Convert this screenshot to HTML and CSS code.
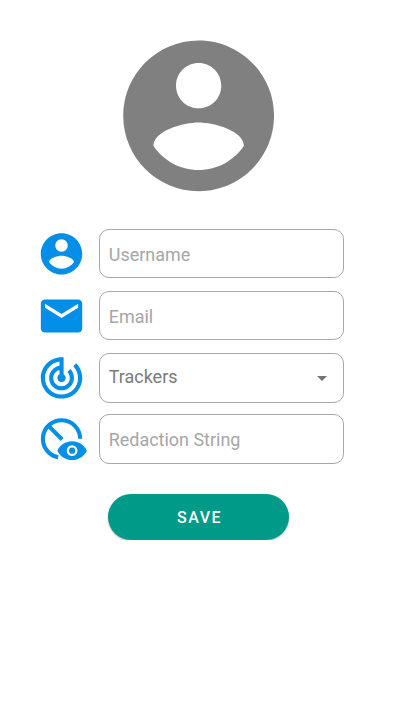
FILE: index.html
```html
<!DOCTYPE html>
<html lang="en">
<head>
<meta charset="utf-8">
<title>Profile</title>
<link rel="stylesheet" href="styles.css">
</head>
<body>
<main class="profile">
  <svg class="avatar" viewBox="-0.02 -0.04 24 24"><path d="M12 2C6.48 2 2 6.48 2 12s4.48 10 10 10 10-4.48 10-10S17.52 2 12 2zm0 3c1.66 0 3 1.34 3 3s-1.34 3-3 3-3-1.34-3-3 1.34-3 3-3zm0 14.2c-2.5 0-4.71-1.28-6-3.22.03-1.99 4-3.08 6-3.08 1.99 0 5.97 1.09 6 3.08-1.29 1.94-3.5 3.22-6 3.22z"/></svg>
  <form class="form">
    <div class="row">
      <svg class="icon" viewBox="0.15 0 24 24"><path d="M12 2C6.48 2 2 6.48 2 12s4.48 10 10 10 10-4.48 10-10S17.52 2 12 2zm0 3c1.66 0 3 1.34 3 3s-1.34 3-3 3-3-1.34-3-3 1.34-3 3-3zm0 14.2c-2.5 0-4.71-1.28-6-3.22.03-1.99 4-3.08 6-3.08 1.99 0 5.97 1.09 6 3.08-1.29 1.94-3.5 3.22-6 3.22z"/></svg>
      <div class="field">Username</div>
    </div>
    <div class="row">
      <svg class="icon" viewBox="0.15 -0.1 24 24"><path d="M20 4H4c-1.1 0-1.99.9-1.99 2L2 18c0 1.1.9 2 2 2h16c1.1 0 2-.9 2-2V6c0-1.1-.9-2-2-2zm0 4l-8 5-8-5V6l8 5 8-5v2z"/></svg>
      <div class="field">Email</div>
    </div>
    <div class="row">
      <svg class="icon" viewBox="0.15 -0.5 24 24"><path d="M19.07 4.93l-1.41 1.41C19.1 7.79 20 9.79 20 12c0 4.42-3.58 8-8 8s-8-3.58-8-8c0-4.08 3.05-7.44 7-7.93v2.02C8.16 6.57 6 9.03 6 12c0 3.31 2.69 6 6 6s6-2.69 6-6c0-1.66-.67-3.16-1.76-4.24l-1.41 1.41C15.55 9.9 16 10.9 16 12c0 2.21-1.79 4-4 4s-4-1.79-4-4c0-1.86 1.28-3.41 3-3.86v2.14c-.6.35-1 .98-1 1.72 0 1.1.9 2 2 2s2-.9 2-2c0-.74-.4-1.38-1-1.72V2h-1C6.48 2 2 6.48 2 12s4.48 10 10 10 10-4.48 10-10c0-2.76-1.12-5.26-2.93-7.07z"/></svg>
      <div class="field select">Trackers<span class="arrow"></span></div>
    </div>
    <div class="row">
      <svg class="icon" viewBox="0.15 0 24 24"><path class="line" d="M21 12A9 9 0 1 0 10.4 20.86M5.6 5.6L12.3 12.3"/><path fill-rule="evenodd" d="M10 17.7C11.2 15 14 13.2 17.1 13.2s5.9 1.8 7.1 4.5c-1.2 2.7-4 4.5-7.1 4.5s-5.9-1.8-7.1-4.5zM17.1 15.1a2.6 2.6 0 1 0 0 5.2 2.6 2.6 0 1 0 0-5.2z"/><circle cx="17.1" cy="17.7" r="1.5"/></svg>
      <div class="field">Redaction String</div>
    </div>
  </form>
  <button class="save" type="button">SAVE</button>
</main>
</body>
</html>
```

FILE: styles.css
```css
body {
  margin: 0;
  background: #fff;
  font-family: Roboto, "Liberation Sans", sans-serif;
}
.profile {
  display: flex;
  flex-direction: column;
  padding-top: 25.4px;
}
.avatar {
  width: 181px;
  height: 181px;
  margin-left: 108px;
  fill: #808080;
}
.form {
  display: flex;
  flex-direction: column;
  gap: 12.35px;
  margin: 22.5px 0 0 36.6px;
}
.row {
  display: flex;
  align-items: center;
  height: 49.5px;
}
.icon {
  width: 49.7px;
  height: 49.7px;
  margin-right: 12.5px;
  fill: #038ee8;
  overflow: visible;
}
.line {
  fill: none;
  stroke: #038ee8;
  stroke-width: 2;
}
.field {
  box-sizing: border-box;
  display: flex;
  align-items: center;
  justify-content: space-between;
  width: 245.6px;
  height: 49.5px;
  padding: 1.6px 16px 0 9px;
  border: 1.3px solid #a8a8a8;
  border-radius: 10px;
  color: #a6a6a6;
  font-size: 17.95px;
}
.select {
  height: 50px;
  margin-top: 1px;
  padding-top: 0;
  padding-bottom: 2.6px;
  color: #7b7b7b;
}
.arrow {
  margin-top: 4px;
  border: 5px solid transparent;
  border-top-color: #757575;
  border-bottom: 0;
}
.save {
  width: 181px;
  height: 46px;
  margin: 30px 0 0 108px;
  padding: 1px 0 0 2px;
  border: 0;
  border-radius: 23px;
  background: #009a88;
  box-shadow: 0 1px 2px rgba(0, 0, 0, 0.3);
  color: #fff;
  font: 500 16px Roboto, "Liberation Sans", sans-serif;
  letter-spacing: 1.5px;
}
```
